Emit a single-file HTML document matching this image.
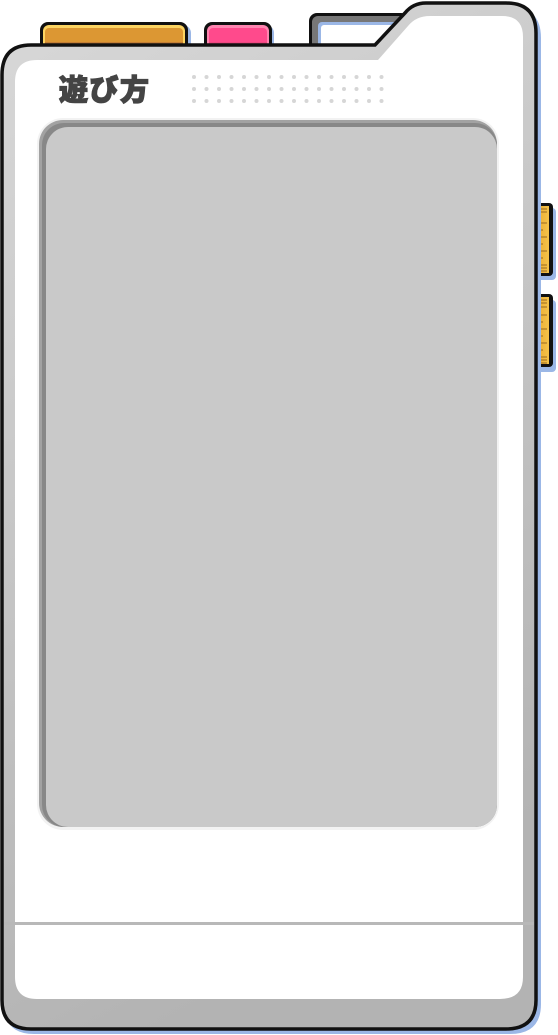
<!DOCTYPE html>
<html><head><meta charset="utf-8"><style>
html,body{margin:0;padding:0;background:#fff;width:558px;height:1035px;overflow:hidden}
svg{display:block}
</style></head><body>
<svg width="558" height="1035" viewBox="0 0 558 1035" xmlns="http://www.w3.org/2000/svg">
<defs>
<linearGradient id="body" x1="0" y1="0" x2="0.3" y2="1">
<stop offset="0" stop-color="#d8d8d8"/><stop offset="1" stop-color="#b3b3b3"/>
</linearGradient>
<linearGradient id="btn" x1="0" y1="0" x2="1" y2="0">
<stop offset="0" stop-color="#e8a82c"/><stop offset="1" stop-color="#f4c24a"/>
</linearGradient>
</defs>
<rect x="43" y="25" width="148" height="40" rx="8" fill="#9bb7e6"/>
<rect x="40" y="22" width="148" height="40" rx="8" fill="#111"/>
<rect x="43" y="25" width="142" height="35" rx="6" fill="#fcd462"/>
<rect x="45" y="28" width="138" height="32" rx="4" fill="#dc9733"/>
<rect x="45" y="42" width="138" height="10" fill="#c47f35"/>
<rect x="207" y="25" width="67" height="40" rx="8" fill="#9bb7e6"/>
<rect x="204" y="22" width="68" height="40" rx="8" fill="#111"/>
<rect x="207" y="25" width="62" height="35" rx="6" fill="#ff85b0"/>
<rect x="209" y="28" width="58" height="32" rx="4" fill="#ff4a8c"/>
<rect x="209" y="42" width="58" height="10" fill="#ee4880"/>
<rect x="309" y="13" width="100" height="50" rx="8" fill="#111"/>
<rect x="312" y="16" width="95" height="45" rx="6" fill="#777"/>
<rect x="318" y="22" width="90" height="40" rx="4" fill="#9bb7e6"/>
<rect x="321" y="25" width="85" height="40" rx="3" fill="#fff"/>
<rect x="536" y="208" width="20" height="72" rx="4" fill="#9bb7e6"/>
<rect x="536" y="300" width="20" height="72" rx="4" fill="#9bb7e6"/>
<rect x="531" y="203" width="22" height="73" rx="4" fill="#111"/>
<rect x="534" y="206" width="15" height="67" fill="url(#btn)"/>
<rect x="531" y="294" width="22" height="73" rx="4" fill="#111"/>
<rect x="534" y="297" width="15" height="67" fill="url(#btn)"/>
<g stroke="#9a6a20" stroke-width="1">
<path d="M535 209h12M535 212h12M535 223h12M535 230h8M535 237h12M535 244h8M535 251h12M535 258h8M535 265h12M535 268h12M535 271h12"/>
<path d="M535 300h12M535 303h12M535 307h12M535 315h12M535 322h8M535 329h12M535 336h8M535 343h12M535 350h8M535 357h12M535 360h12M535 363h12"/>
</g>
<path d="M34 49 H379 L409 17 Q417 7 430 7 H510 Q541 7 541 38 V1004 Q541 1034 510 1034 H34 Q4 1034 4 1004 V79 Q4 49 34 49 Z" fill="#9bb7e6"/>
<path d="M31 45 H375 L405 13 Q413 3 426 3 H506 Q536 3 536 33 V1000 Q536 1029 506 1029 H31 Q2 1029 2 1000 V75 Q2 45 31 45 Z" fill="url(#body)" stroke="#111" stroke-width="3.5"/>
<path d="M37 60 H378 L408 26 Q416 16 430 16 H502 Q523 16 523 37 V977 Q523 999 500 999 H37 Q15 999 15 977 V82 Q15 60 37 60 Z" fill="#fff"/>
<rect x="4" y="922" width="530" height="3" fill="#b8b8b8"/>
<text x="59" y="100" font-family="'Liberation Sans','Noto Sans CJK JP',sans-serif" font-weight="900" font-size="29" fill="#444" stroke="#444" stroke-width="1.2" textLength="90">遊び方</text>
<g fill="#d6d6d6">
<g id="row">
<circle cx="194" cy="77" r="2"/><circle cx="206.5" cy="77" r="2"/><circle cx="219" cy="77" r="2"/><circle cx="231.5" cy="77" r="2"/><circle cx="244" cy="77" r="2"/><circle cx="256.5" cy="77" r="2"/><circle cx="269" cy="77" r="2"/><circle cx="281.5" cy="77" r="2"/><circle cx="294" cy="77" r="2"/><circle cx="306.5" cy="77" r="2"/><circle cx="319" cy="77" r="2"/><circle cx="331.5" cy="77" r="2"/><circle cx="344" cy="77" r="2"/><circle cx="356.5" cy="77" r="2"/><circle cx="369" cy="77" r="2"/><circle cx="381.5" cy="77" r="2"/>
</g>
<use href="#row" y="12"/><use href="#row" y="24"/>
</g>
<rect x="37" y="118" width="462" height="712" rx="26" fill="#f2f2f2"/>
<rect x="39" y="120" width="458" height="707" rx="24" fill="#a2a2a2"/>
<rect x="42" y="123" width="455" height="704" rx="22" fill="#888"/>
<rect x="46" y="127" width="451" height="700" rx="22" fill="#c9c9c9"/>
</svg>
</body></html>
